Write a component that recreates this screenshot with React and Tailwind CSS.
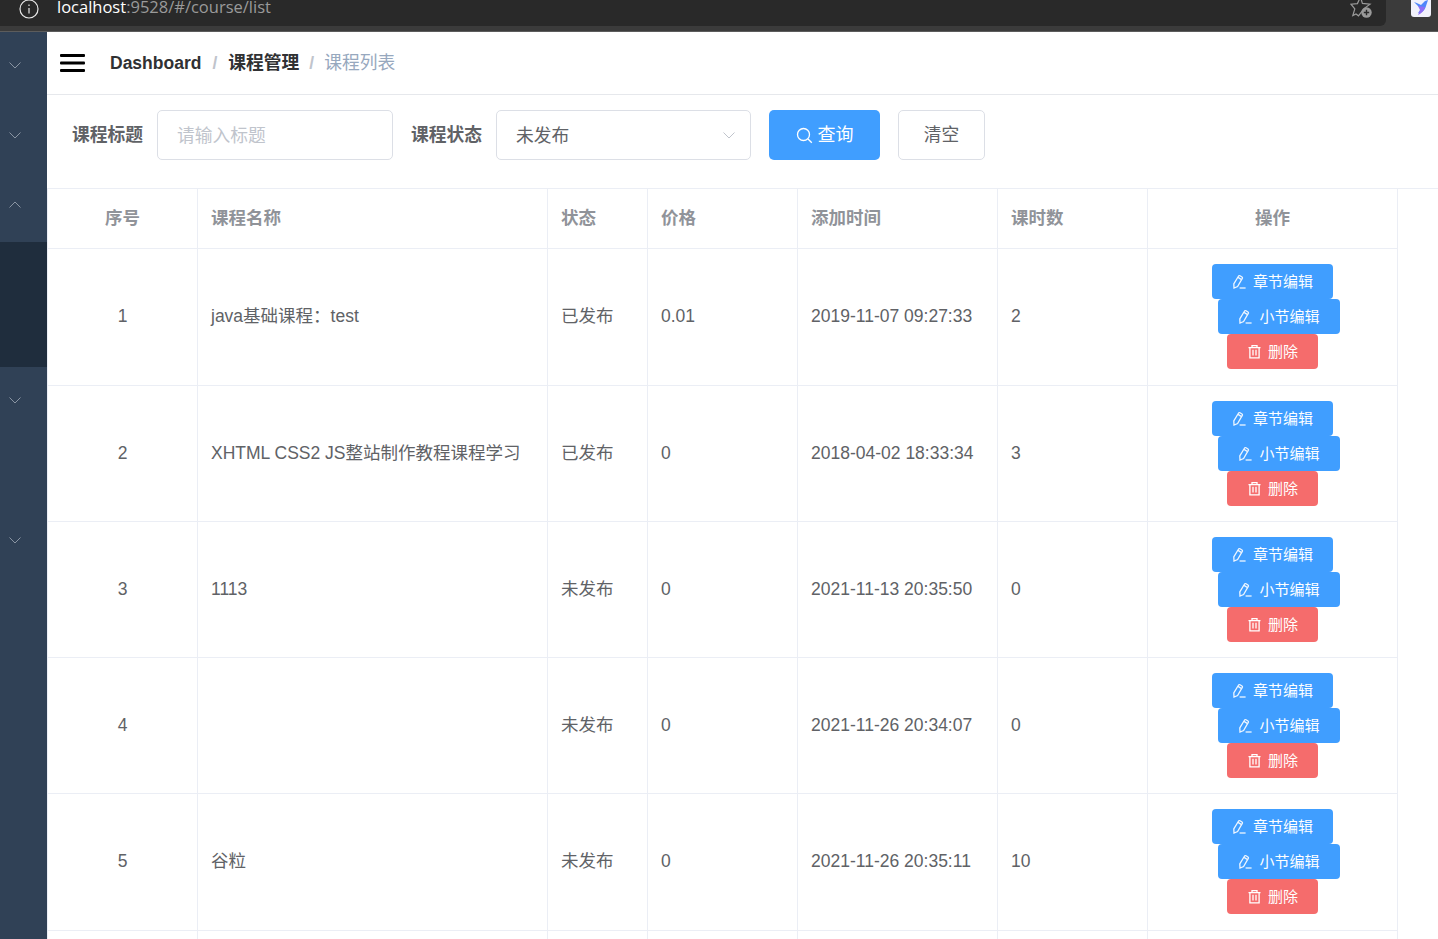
const rows = [
  { n: 1, name: "java基础课程：test", st: "已发布", price: "0.01", time: "2019-11-07 09:27:33", c: "2", h: "h-[137px]", p: "pb-[2px]" },
  { n: 2, name: "XHTML CSS2 JS整站制作教程课程学习", st: "已发布", price: "0", time: "2018-04-02 18:33:34", c: "3", h: "h-[136px]", p: "" },
  { n: 3, name: "1113", st: "未发布", price: "0", time: "2021-11-13 20:35:50", c: "0", h: "h-[136px]", p: "" },
  { n: 4, name: "", st: "未发布", price: "0", time: "2021-11-26 20:34:07", c: "0", h: "h-[136px]", p: "" },
  { n: 5, name: "谷粒", st: "未发布", price: "0", time: "2021-11-26 20:35:11", c: "10", h: "h-[137px]", p: "pb-[2px]" },
];
const widths = ["w-[150px]", "w-[350px]", "w-[100px]", "w-[150px]", "w-[200px]", "w-[150px]", "w-[250px]"];
const heads = ["序号", "课程名称", "状态", "价格", "添加时间", "课时数", "操作"];

const Chevron = ({ up, className = "" }) => (
  <svg width="14" height="9" viewBox="0 0 14 9" fill="none" stroke="currentColor" strokeWidth="1" className={className}>
    <path d={up ? "M1.5 7.5 7 2l5.5 5.5" : "M1.5 1.5 7 7l5.5-5.5"} />
  </svg>
);
const Pencil = () => (
  <svg width="15" height="15" viewBox="0 0 15 15" fill="none" stroke="#eef6ff" strokeWidth="1.3">
    <path d="M1.8 9.8 6.6 2a1 1 0 0 1 1.4-.3L10 3a1 1 0 0 1 .3 1.4L5.6 12.6 2 14z" />
    <path d="M6 3.4 9.2 5.4" />
    <path d="M7.6 14h6" />
  </svg>
);
const Trash = () => (
  <svg width="15" height="15" viewBox="0 0 15 15" fill="none" stroke="#fff" strokeWidth="1.3">
    <path d="M1.5 3.6h12M5 3.4V1.6h5v1.8M2.9 3.6v10.2h9.2V3.6M6 5.8v5.6M9 5.8v5.6" />
  </svg>
);
const Btn = ({ bg, w, icon, children, extra = "" }) => (
  <div className={`flex h-[35px] items-center justify-center gap-[6px] rounded-[4px] text-[15px] text-white ${bg} ${w} ${extra}`}>
    {icon}
    <span className="translate-y-[1px]">{children}</span>
  </div>
);

export default function App() {
  return (
    <div className="flex h-[939px] flex-col overflow-hidden bg-white text-[17.5px] text-[#606266]" style={{ fontFamily: '"Liberation Sans","Noto Sans CJK SC",sans-serif' }}>
      <div className="relative h-[32px] shrink-0 border-b border-[#5c5c5c] bg-[#3b3b3b]">
        <div className="flex h-[26px] w-[1386px] items-center rounded-br-[6px] bg-[#292929]">
          <svg width="20" height="20" viewBox="0 0 20 20" fill="none" stroke="#e8e8e8" strokeWidth="1.2" className="ml-[19px] -mt-[8px]">
            <circle cx="10" cy="10" r="9" />
            <path d="M10 9v5.5M10 5.5v1.4" />
          </svg>
          <div className="ml-[18px] -mt-[11px] text-[16.5px] leading-none" style={{ fontFamily: '"Open Sans",sans-serif' }}>
            <span className="text-white">localhost</span>
            <span className="text-[#9a9a9a]">:9528/#/course/list</span>
          </div>
        </div>
        <svg width="24" height="20" viewBox="0 0 24 20" fill="none" stroke="#9a9a9a" strokeWidth="1.2" className="absolute left-[1350px] top-0">
          <path d="M10.5 -3 12.4 3.4 20 4.2 14 8.6 8.5 15.8 6 14 2.8 15.6 4.8 9 1 4.2l6.4-.6z" />
          <circle cx="16.5" cy="12.5" r="5.2" fill="#9a9a9a" stroke="none" />
          <path d="M16.5 9.8v5.4M13.8 12.5h5.4" stroke="#292929" strokeWidth="1.4" />
        </svg>
        <div className="absolute left-[1411px] top-0 h-[17px] w-[20px] rounded-b-[3px] bg-[#f1f1fb]">
          <svg width="20" height="17" viewBox="0 0 20 17">
            <path d="M3 2 C6 3 8 4 10 5 L14 1 L17 0 L15 6 C14 10 11 13 7 13 L10 9 Z" fill="#4f86fb" />
            <path d="M7 6 L14 7 C13 11 11 13 7 15 L9 10 Z" fill="#8f6df5" />
          </svg>
        </div>
      </div>

      <div className="flex min-h-0 flex-1">
        <aside className="flex w-[47px] shrink-0 flex-col bg-[#304156] text-[#8a95a3]">
          <div className="flex h-[66px] items-center pl-[8px]"><Chevron /></div>
          <div className="flex h-[74px] items-center pl-[8px]"><Chevron /></div>
          <div className="flex h-[70px] items-center pb-[5px] pl-[8px]"><Chevron up /></div>
          <div className="h-[125px] bg-[#1f2d3d]" />
          <div className="flex h-[66px] items-center pl-[8px]"><Chevron /></div>
          <div className="h-[70px]" />
          <div className="flex h-[74px] items-center pl-[8px]"><Chevron /></div>
        </aside>

        <main className="min-w-0 flex-1">
          <div className="flex h-[63px] items-center border-b border-[#e6e8ec] pl-[13px]">
            <svg width="25" height="20" viewBox="0 0 25 20" fill="#000">
              <rect x="0" y="1" width="25" height="3" rx="1" />
              <rect x="0" y="8.5" width="25" height="3" rx="1" />
              <rect x="0" y="16" width="25" height="3" rx="1" />
            </svg>
            <div className="ml-[25px] flex items-center">
              <span className="font-bold text-[#303133]">Dashboard</span>
              <span className="mx-[11px] font-bold text-[#c0c4cc]">/</span>
              <span className="text-[17.75px] font-bold text-[#303133]">课程管理</span>
              <span className="mx-[10px] font-bold text-[#c0c4cc]">/</span>
              <span className="text-[17.75px] text-[#97a8be]">课程列表</span>
            </div>
          </div>

          <div className="flex h-[93px] items-start pl-[25px] pt-[15px] text-[17.75px]">
            <div className="flex h-[50px] w-[85px] items-center font-bold">课程标题</div>
            <div className="flex h-[50px] w-[236px] items-center rounded-[5px] border border-[#dcdfe6] pl-[19px] pt-[2px] text-[#c0c4cc]">请输入标题</div>
            <div className="ml-[18px] flex h-[50px] w-[85px] items-center font-bold">课程状态</div>
            <div className="flex h-[50px] w-[255px] items-center justify-between rounded-[5px] border border-[#dcdfe6] pl-[19px] pr-[14px]">
              <span className="translate-y-[1px]">未发布</span>
              <Chevron className="text-[#c0c4cc]" />
            </div>
            <div className="ml-[18px] flex h-[50px] w-[111px] items-center justify-center gap-[5px] rounded-[5px] bg-[#409eff] text-[18px] text-white">
              <svg width="17" height="17" viewBox="0 0 17 17" fill="none" stroke="#fff" strokeWidth="1.3">
                <circle cx="7.5" cy="7.5" r="6" />
                <path d="m12 12 3.8 3.8" />
              </svg>
              <span>查询</span>
            </div>
            <div className="ml-[18px] flex h-[50px] w-[87px] items-center justify-center rounded-[5px] border border-[#dcdfe6]">清空</div>
          </div>

          <div className="border-t border-[#ebeef5]">
            <table className="w-[1351px] table-fixed border-separate border-spacing-0 border-l border-[#ebeef5]">
              <colgroup>
                {widths.map((w, i) => <col key={i} className={w} />)}
              </colgroup>
              <thead>
                <tr className="h-[60px]">
                  {heads.map((h, i) => (
                    <th key={h} className={`border-b border-r border-[#ebeef5] px-[13px] font-bold text-[#909399] ${i === 0 || i === 6 ? "text-center" : "text-left"}`}>{h}</th>
                  ))}
                </tr>
              </thead>
              <tbody>
                {rows.map((r) => (
                  <tr key={r.n} className={r.h}>
                    <td className={`border-b border-r border-[#ebeef5] px-[13px] text-center ${r.p}`}>{r.n}</td>
                    <td className={`border-b border-r border-[#ebeef5] px-[13px] ${r.p}`}>{r.name}</td>
                    <td className={`border-b border-r border-[#ebeef5] px-[13px] ${r.p}`}>{r.st}</td>
                    <td className={`border-b border-r border-[#ebeef5] px-[13px] ${r.p}`}>{r.price}</td>
                    <td className={`border-b border-r border-[#ebeef5] px-[13px] ${r.p}`}>{r.time}</td>
                    <td className={`border-b border-r border-[#ebeef5] px-[13px] ${r.p}`}>{r.c}</td>
                    <td className="border-b border-r border-[#ebeef5] pt-[15px] align-top">
                      <div className="flex flex-col items-center">
                        <Btn bg="bg-[#409eff]" w="w-[121px]" icon={<Pencil />}>章节编辑</Btn>
                        <Btn bg="bg-[#409eff]" w="w-[122px]" extra="ml-[13px]" icon={<Pencil />}>小节编辑</Btn>
                        <Btn bg="bg-[#f56c6c]" w="w-[91px]" icon={<Trash />}>删除</Btn>
                      </div>
                    </td>
                  </tr>
                ))}
                <tr className="h-[60px]">
                  {heads.map((h) => <td key={h} className="border-r border-[#ebeef5]" />)}
                </tr>
              </tbody>
            </table>
          </div>
        </main>
      </div>
    </div>
  );
}
